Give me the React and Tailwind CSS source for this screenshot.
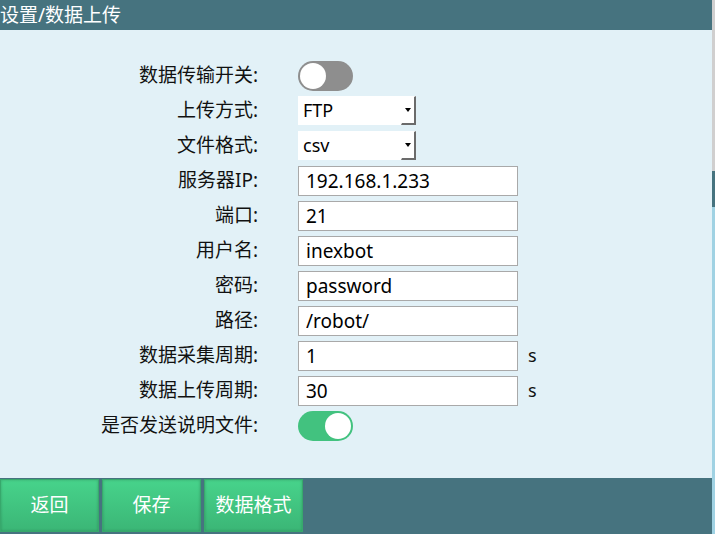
import { useState } from "react";

const font = { fontFamily: '"Noto Sans", "Noto Sans CJK SC", sans-serif' };

const Toggle = ({ on, onChange }) => (
  <button
    onClick={() => onChange(!on)}
    className={`relative w-[55px] h-[30px] rounded-full ${on ? "bg-[#42c27f]" : "bg-[#8e8e8e]"}`}
  >
    <span
      className={`absolute top-[2px] w-[26px] h-[26px] rounded-full bg-white ${on ? "left-[27px]" : "left-[2px]"}`}
    />
  </button>
);

const FakeSelect = ({ value }) => (
  <div className="flex w-[118px] h-[29px] bg-white">
    <div className="flex-1 flex items-center pl-[5px] text-[18px] text-black">{value}</div>
    <div className="w-[15px] h-full flex items-center justify-center border-l border-t border-white border-r-2 border-b-2 border-r-[#6b6b6b] border-b-[#6b6b6b] bg-white">
      <span className="block w-0 h-0 border-l-[3px] border-r-[3px] border-t-[4px] border-l-transparent border-r-transparent border-t-black" />
    </div>
  </div>
);

const TextBox = ({ value }) => (
  <input
    defaultValue={value}
    className="w-[220px] h-[30px] bg-white border border-[#a9a9a9] px-[7px] text-[19px] text-black outline-none"
    style={font}
  />
);

const Row = ({ label, children, unit }) => (
  <div className="flex items-center h-[35px]">
    <div className="w-[258px] text-right text-[19px] text-[#111] leading-none">{label}</div>
    <div className="ml-[40px] flex items-center">{children}</div>
    {unit && <span className="ml-[10px] text-[18px] text-[#111]">{unit}</span>}
  </div>
);

export default function App() {
  const [transfer, setTransfer] = useState(false);
  const [sendDoc, setSendDoc] = useState(true);

  return (
    <div className="flex w-[716px] h-[534px] overflow-hidden bg-white" style={font}>
      <div className="flex flex-col w-[712px] h-full">
        <div className="h-[30px] bg-[#46737f] flex items-center">
          <span className="text-white text-[19px] leading-none">设置/数据上传</span>
        </div>

        <div className="flex-1 bg-[#e2f1f7] pt-[28px]">
          <Row label="数据传输开关:">
            <Toggle on={transfer} onChange={setTransfer} />
          </Row>
          <Row label="上传方式:">
            <FakeSelect value="FTP" />
          </Row>
          <Row label="文件格式:">
            <FakeSelect value="csv" />
          </Row>
          <Row label="服务器IP:">
            <TextBox value="192.168.1.233" />
          </Row>
          <Row label="端口:">
            <TextBox value="21" />
          </Row>
          <Row label="用户名:">
            <TextBox value="inexbot" />
          </Row>
          <Row label="密码:">
            <TextBox value="password" />
          </Row>
          <Row label="路径:">
            <TextBox value="/robot/" />
          </Row>
          <Row label="数据采集周期:" unit="s">
            <TextBox value="1" />
          </Row>
          <Row label="数据上传周期:" unit="s">
            <TextBox value="30" />
          </Row>
          <Row label="是否发送说明文件:">
            <Toggle on={sendDoc} onChange={setSendDoc} />
          </Row>
        </div>

        <div className="h-[56px] bg-[#46737f] flex items-start gap-[3px] pt-[1px]">
          {["返回", "保存", "数据格式"].map((t) => (
            <button
              key={t}
              className="w-[99px] h-[53px] bg-gradient-to-b from-[#47d38b] to-[#3bb676] border border-[#37a86c] shadow-[inset_0_0_3px_rgba(0,0,0,0.2)] text-white text-[19px]"
            >
              {t}
            </button>
          ))}
        </div>
      </div>

      <div className="w-[4px] h-full flex flex-col">
        <div className="h-[171px] bg-[#d0cfcf] w-[3px]" />
        <div className="h-[36px] bg-[#46737f] w-[3px]" />
        <div className="flex-1 bg-[#a0d2e3] w-[3px]" />
      </div>
    </div>
  );
}
